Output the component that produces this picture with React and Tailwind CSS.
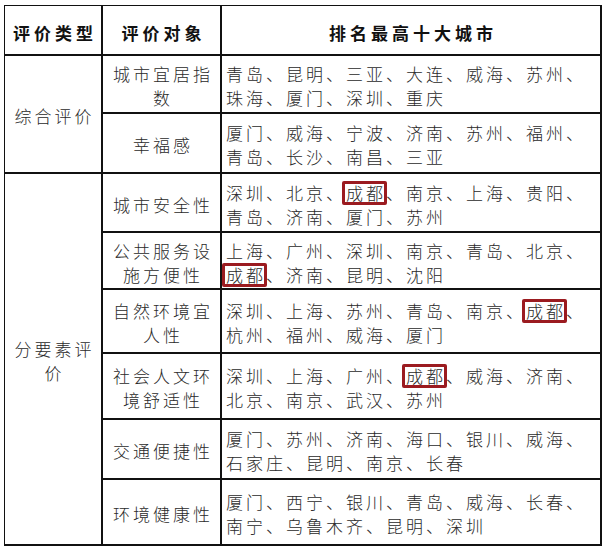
import React from 'react';

const cell = 'border-r-2 border-b-2 border-[#111] flex items-center';
const side = cell + ' justify-center text-center pt-1 pl-[3px]';
const list = cell + ' pl-[4px] pr-[2px] pt-1';

const Chengdu = () => (
  <span className="relative">
    成都
    <span className="absolute -left-[4px] -right-[1px] top-[1px] bottom-0 border-[3px] border-[#9b1b20] rounded-[2px]" />
  </span>
);

const rows = [
  { name: '城市宜居指数', cities: <>青岛、昆明、三亚、大连、威海、苏州、珠海、厦门、深圳、重庆</> },
  { name: '幸福感', cities: <>厦门、威海、宁波、济南、苏州、福州、青岛、长沙、南昌、三亚</> },
  { name: '城市安全性', cities: <>深圳、北京、<Chengdu />、南京、上海、贵阳、青岛、济南、厦门、苏州</> },
  { name: '公共服务设施方便性', cities: <>上海、广州、深圳、南京、青岛、北京、<Chengdu />、济南、昆明、沈阳</> },
  { name: '自然环境宜人性', cities: <>深圳、上海、苏州、青岛、南京、<Chengdu />、杭州、福州、威海、厦门</> },
  { name: '社会人文环境舒适性', cities: <>深圳、上海、广州、<Chengdu />、威海、济南、北京、南京、武汉、苏州</> },
  { name: '交通便捷性', cities: <>厦门、苏州、济南、海口、银川、威海、石家庄、昆明、南京、长春</> },
  { name: '环境健康性', cities: <>厦门、西宁、银川、青岛、威海、长春、南宁、乌鲁木齐、昆明、深圳</> },
];

export default function App() {
  return (
    <div className="w-[605px] h-[552px] bg-white pl-[4px] pt-[5px] font-['Noto_Sans_CJK_SC',sans-serif] font-light text-[17px] leading-[24px] tracking-[3px] text-[#2a2a2a]">
      <div className="w-[598px] grid grid-cols-[98px_119px_380px] grid-rows-[50px_58px_60px_59px_57px_64px_66px_60px_66px] border-t border-l border-[#111]">
        <div className={cell + ' justify-center pt-[6px] pl-[4px] font-bold tracking-[4px] text-[#111]'}>评价类型</div>
        <div className={cell + ' justify-center pt-[6px] pl-[4px] font-bold tracking-[4px] text-[#111]'}>评价对象</div>
        <div className={cell + ' justify-center pt-[6px] pl-[4px] font-bold tracking-[4px] text-[#111]'}>排名最高十大城市</div>

        <div className={side + ' col-start-1 row-start-2 row-span-2'}>综合评价</div>
        <div className={side + ' col-start-1 row-start-4 row-span-6'}>分要素评价</div>

        {rows.map((r) => (
          <React.Fragment key={r.name}>
            <div className={side}>{r.name}</div>
            <div className={list}>
              <p>{r.cities}</p>
            </div>
          </React.Fragment>
        ))}
      </div>
    </div>
  );
}
